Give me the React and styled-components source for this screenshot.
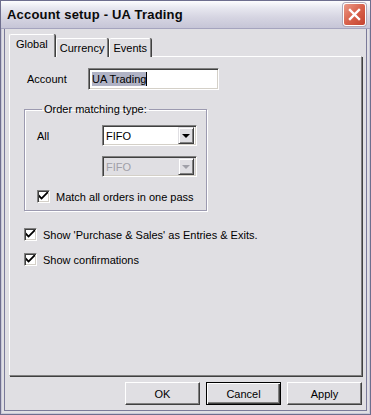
import React from 'react'
import styled, { createGlobalStyle, css } from 'styled-components'

const Global = createGlobalStyle`
  html, body { margin: 0; padding: 0; background: #e0dfe3; }
  body { font-family: Tahoma, "Liberation Sans", "DejaVu Sans", sans-serif; font-size: 11px; color: #000; }
`

const Window = styled.div`
  width: 371px;
  height: 415px;
  box-sizing: border-box;
  background: #e0dfe3;
  border: 1px solid #6e6e8e;
  box-shadow: inset 0 0 0 1px #c8c8d8, inset 0 0 0 3px #e0dfe3, inset 0 0 0 4px #7a7a9a;
  display: flex;
  flex-direction: column;
`

const TitleBar = styled.div`
  height: 27px;
  flex: none;
  display: flex;
  align-items: center;
  justify-content: space-between;
  padding: 0 4px 0 6px;
  background: linear-gradient(#fdfdfe 0%, #e8e8f0 25%, #d6d5e2 60%, #c6c5d7 100%);
  border-bottom: 1px solid #a5a4be;
`

const Title = styled.span`
  font-weight: bold;
  font-size: 13px;
  color: #0a0a0a;
  letter-spacing: 0.2px;
`

const CloseButton = styled.div`
  width: 21px;
  height: 21px;
  border-radius: 3px;
  background: linear-gradient(135deg, #ec9a88 0%, #d8624c 50%, #c4432f 100%);
  border: 1px solid #fff;
  box-shadow: 0 0 0 1px #b0a8b8;
  display: flex;
  align-items: center;
  justify-content: center;
`

const Client = styled.div`
  flex: 1;
  display: flex;
  flex-direction: column;
  padding: 6px 8px 9px 8px;
`

const TabStrip = styled.div`
  display: flex;
  align-items: flex-end;
  height: 22px;
  margin-bottom: -1px;
  position: relative;
  z-index: 1;
`

const Tab = styled.div`
  box-sizing: border-box;
  height: 19px;
  padding: 0 3px 1px 3px;
  display: flex;
  align-items: center;
  background: #e0dfe3;
  border-top: 1px solid #fff;
  border-left: 1px solid #fff;
  border-right: 1px solid #808080;
  border-radius: 2px 2px 0 0;
  box-shadow: 1px 0 0 #404040;
  margin-right: 1px;
  white-space: nowrap;
  ${p =>
    p.$active &&
    css`
      height: 23px;
      padding: 0 6px 4px 6px;
    `}
`

const Panel = styled.div`
  flex: 1;
  box-sizing: border-box;
  border-top: 1px solid #fff;
  border-left: 1px solid #fff;
  border-right: 1px solid #808080;
  border-bottom: 1px solid #808080;
  box-shadow: 1px 1px 0 #404040;
  padding: 11px 14px 0 14px;
  display: flex;
  flex-direction: column;
`

const Row = styled.div`
  display: flex;
  align-items: center;
`

const Label = styled.span`
  width: ${p => p.$w || 'auto'};
  padding-left: ${p => p.$pl || '0'};
  box-sizing: border-box;
  flex: none;
`

const sunken = css`
  box-sizing: border-box;
  border-top: 1px solid #808080;
  border-left: 1px solid #808080;
  border-right: 1px solid #fff;
  border-bottom: 1px solid #fff;
  box-shadow: inset 1px 1px 0 #404040, inset -1px -1px 0 #d4d0c8;
`

const TextBox = styled.div`
  ${sunken};
  width: 131px;
  height: 22px;
  background: #fff;
  display: flex;
  align-items: center;
  padding-left: 3px;
`

const Selected = styled.span`
  background: #b0b3c5;
  color: #000;
  border-right: 1px solid #000;
  line-height: 14px;
`

const GroupBox = styled.fieldset`
  margin: 13px 0 0 0;
  width: 183px;
  box-sizing: border-box;
  border: 1px solid #9c9ab0;
  box-shadow: 1px 1px 0 #fff, inset 1px 1px 0 #fff;
  padding: 9px 0 7px 11px;
  display: flex;
  flex-direction: column;
`

const Legend = styled.legend`
  padding: 0 2px;
  margin-left: 6px;
  line-height: 13px;
`

const Combo = styled.div`
  ${sunken};
  width: 95px;
  height: 21px;
  background: ${p => (p.$disabled ? '#e0dfe3' : '#fff')};
  color: ${p => (p.$disabled ? '#a0a0a8' : '#000')};
  display: flex;
  align-items: center;
  justify-content: space-between;
  padding: 2px 2px 2px 3px;
  margin-left: ${p => p.$ml || '0'};
  margin-top: ${p => p.$mt || '0'};
`

const DropButton = styled.div`
  width: 16px;
  height: 17px;
  box-sizing: border-box;
  background: #e0dfe3;
  border-top: 1px solid #e0dfe3;
  border-left: 1px solid #e0dfe3;
  border-right: 1px solid #404040;
  border-bottom: 1px solid #404040;
  box-shadow: inset 1px 1px 0 #fff, inset -1px -1px 0 #808080;
  display: flex;
  align-items: center;
  justify-content: center;
`

const Arrow = styled.div`
  width: 0;
  height: 0;
  border-left: 4px solid transparent;
  border-right: 4px solid transparent;
  border-top: 4px solid ${p => (p.$disabled ? '#a0a0a8' : '#000')};
  margin-top: 1px;
`

const CheckRow = styled.label`
  display: flex;
  align-items: center;
  height: 13px;
  gap: 6px;
  white-space: nowrap;
  margin-top: ${p => p.$mt || '0'};
  padding-left: ${p => p.$pl || '0'};
`

const CheckBox = styled.div`
  ${sunken};
  flex: none;
  width: 13px;
  height: 13px;
  background: #fff;
  display: flex;
  align-items: center;
  justify-content: center;
`

const ButtonRow = styled.div`
  display: flex;
  justify-content: flex-end;
  gap: 6px;
  margin-top: 6px;
`

const Button = styled.div`
  box-sizing: border-box;
  width: 75px;
  height: 23px;
  display: flex;
  align-items: center;
  justify-content: center;
  background: #e0dfe3;
  border-top: 1px solid #fff;
  border-left: 1px solid #fff;
  border-right: 1px solid #404040;
  border-bottom: 1px solid #404040;
  box-shadow: inset -1px -1px 0 #808080;
  ${p =>
    p.$default &&
    css`
      border: 1px solid #000;
      box-shadow: inset 1px 1px 0 #fff, inset -1px -1px 0 #404040, inset -2px -2px 0 #808080;
    `}
`

const Check = () => (
  <svg width="9" height="9" viewBox="0 0 7 7">
    <path d="M0 2 L0 4 L2 6 L7 1 L7 -1 L2 4 Z" fill="#000" />
  </svg>
)

const Combobox = ({ disabled, ml, mt }) => (
  <Combo $disabled={disabled} $ml={ml} $mt={mt}>
    <span>FIFO</span>
    <DropButton>
      <Arrow $disabled={disabled} />
    </DropButton>
  </Combo>
)

export default function App() {
  return (
    <>
      <Global />
      <Window>
        <TitleBar>
          <Title>Account setup - UA Trading</Title>
          <CloseButton>
            <svg width="13" height="13" viewBox="0 0 13 13">
              <path d="M2 2 L11 11 M11 2 L2 11" stroke="#fff" strokeWidth="2.4" strokeLinecap="square" />
            </svg>
          </CloseButton>
        </TitleBar>
        <Client>
          <TabStrip>
            <Tab $active>Global</Tab>
            <Tab>Currency</Tab>
            <Tab>Events</Tab>
          </TabStrip>
          <Panel>
            <Row>
              <Label $w="64px" $pl="3px">Account</Label>
              <TextBox>
                <Selected>UA Trading</Selected>
              </TextBox>
            </Row>
            <GroupBox>
              <Legend>Order matching type:</Legend>
              <Row>
                <Label $w="66px" $pl="1px">All</Label>
                <Combobox />
              </Row>
              <Combobox disabled ml="66px" mt="10px" />
              <CheckRow $pl="1px" $mt="13px">
                <CheckBox><Check /></CheckBox>
                Match all orders in one pass
              </CheckRow>
            </GroupBox>
            <CheckRow $mt="17px">
              <CheckBox><Check /></CheckBox>
              Show 'Purchase &amp; Sales' as Entries &amp; Exits.
            </CheckRow>
            <CheckRow $mt="12px">
              <CheckBox><Check /></CheckBox>
              Show confirmations
            </CheckRow>
          </Panel>
          <ButtonRow>
            <Button>OK</Button>
            <Button $default>Cancel</Button>
            <Button>Apply</Button>
          </ButtonRow>
        </Client>
      </Window>
    </>
  )
}
